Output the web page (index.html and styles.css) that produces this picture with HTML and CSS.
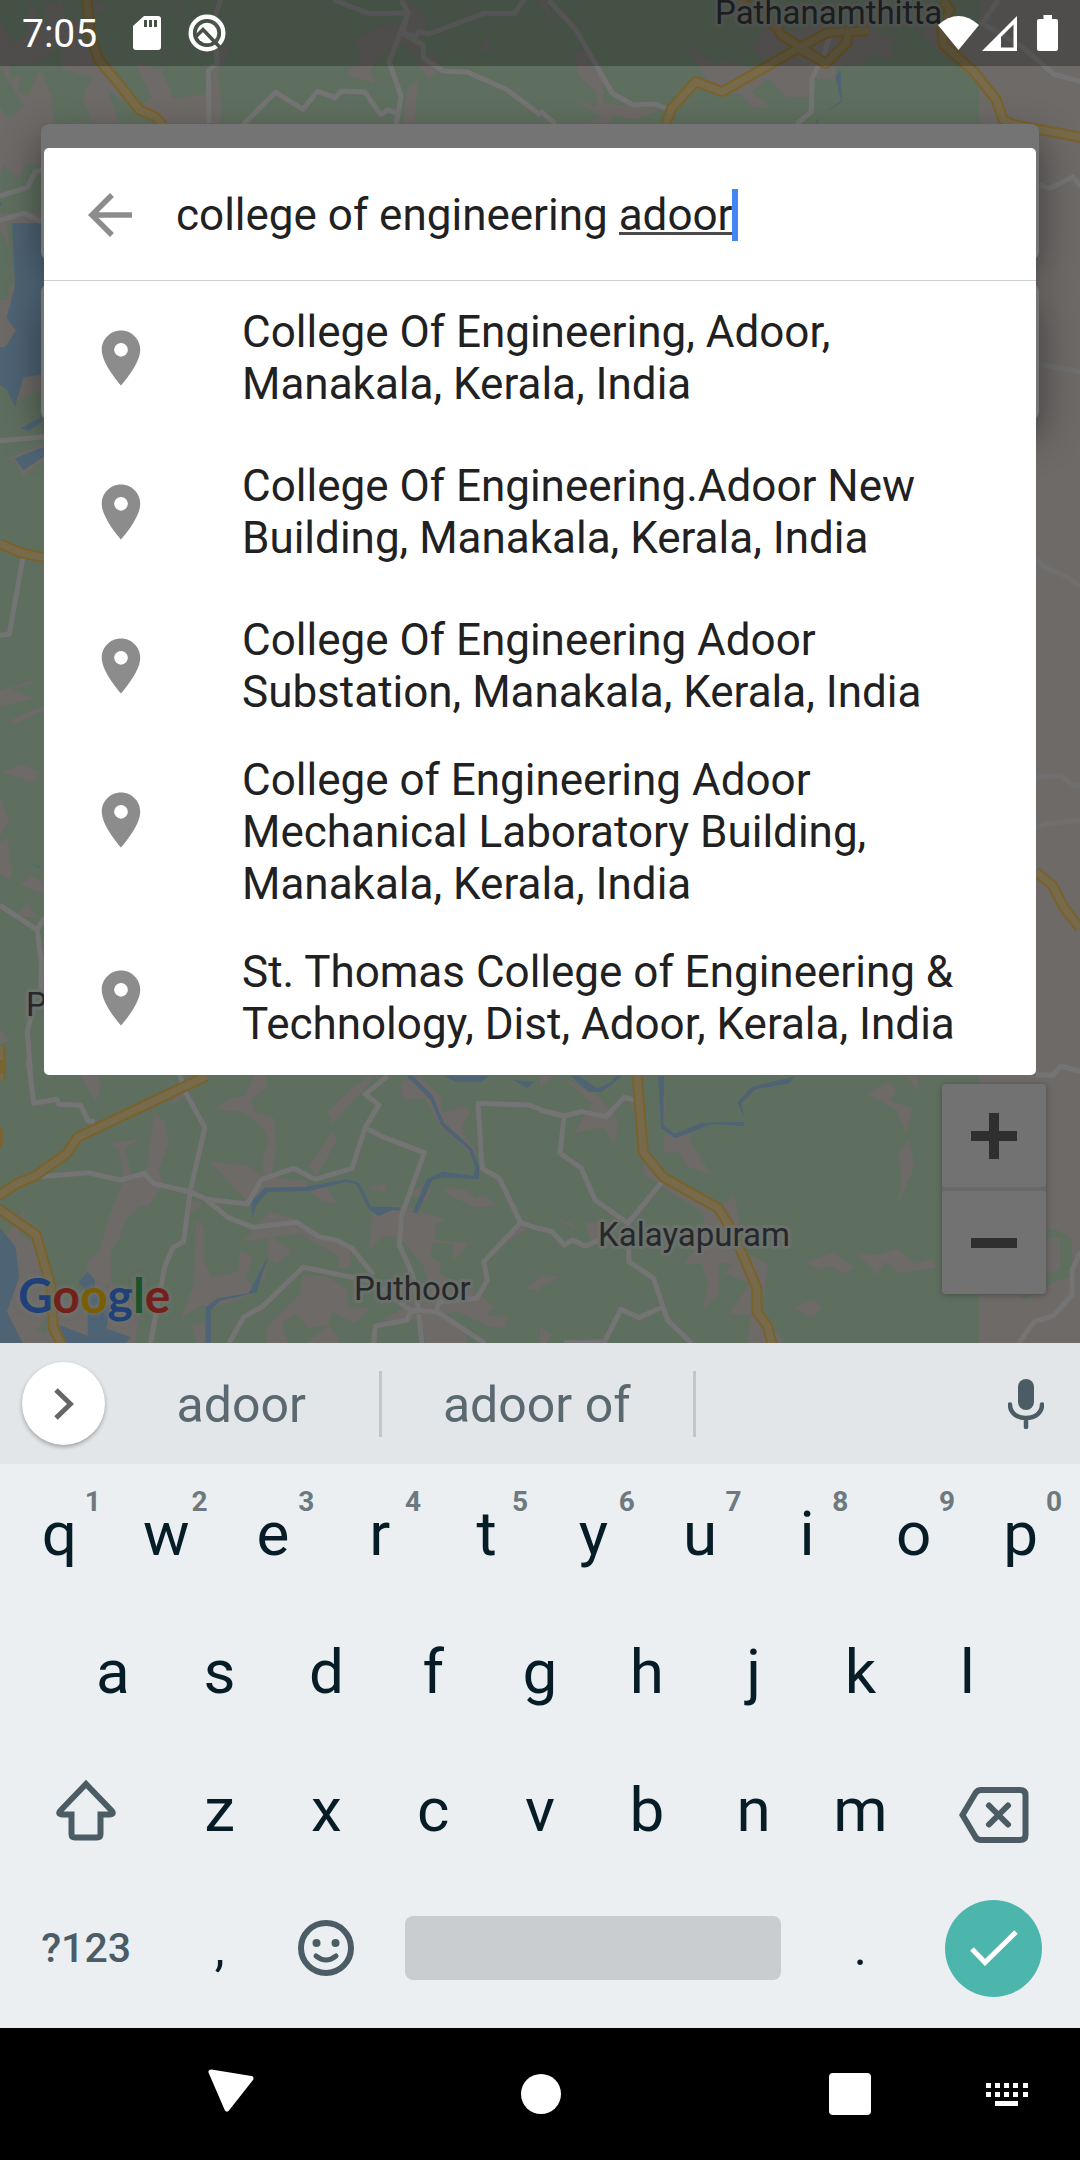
FILE: index.html
```html
<!DOCTYPE html>
<html lang="en">
<head>
<meta charset="utf-8">
<meta name="viewport" content="width=device-width, initial-scale=1">
<title>Place search</title>
<link rel="stylesheet" href="styles.css">
</head>
<body>
<div class="screen">
  <main class="map">
    <svg class="map-canvas" viewBox="0 0 1080 1343" preserveAspectRatio="xMidYMid slice" aria-hidden="true">
      <rect class="green" width="1080" height="1343"/>
      <rect class="land" x="979" width="101" height="1343"/>

      <!-- north west -->
      <g transform="scale(.3444 .3333)">
        <path class="land" d="M0 60L40 130L75 110L90 0L110 60L145 75L120 10L180 0L185 55L240 60L230 110L300 190L380 290L330 310L345 370H0ZM270 0L320 20L280 45ZM385 178L465 210L500 140L470 215L505 295L605 280L640 130L665 140L630 230L645 310L640 370H480L400 330L440 290ZM200 340L240 370H280ZM500 15L530 0L515 28ZM1005 225L1050 165L1030 120L1100 80L1170 70L1180 0L1240 60L1210 170L1170 130L1110 165L1075 210L1088 250ZM1392 145L1420 98V163ZM1210 190L1260 155L1275 205L1245 238ZM1185 258L1212 248L1205 370H1170L1175 320Z"/>
        <path class="green" d="M0 205L70 315L22 360L0 320ZM120 185L180 125V205L268 235L240 290L262 350L215 370H155L150 290L118 205L80 285L52 275L60 220L30 240V195ZM310 265L350 300L330 320Z"/>
        <path class="land" d="M0 350H125V500L70 490L60 540L10 495L0 520ZM0 640L120 635V670H20L45 900H0Z"/>
        <path class="green" d="M0 690L25 740L35 840L20 900H0Z"/>
        <path class="water" d="M35 670H128V900H32L44 860Z"/>
        <path class="water" d="M0 605L8 611L0 618Z"/>
        <path class="road" d="M640 0L625 50L630 190L605 212L607 370M705 375L800 277L880 328L922 274L972 293L992 273L1060 277L1105 344L1125 330L1150 338M970 0L1072 41L1185 38L1130 185L1165 290L1150 372M1165 0L1185 38L1168 100L1228 135L1230 175L1285 212L1358 217L1470 268L1570 345M1168 95L1205 110L1215 95L1245 102L1405 40L1495 40L1515 8L1525 0M0 588L80 562L102 515L128 510M0 660L70 640L120 665"/>
        <path class="highway-edge" d="M252 0L262 100L285 178L340 245L405 330L450 350L475 378"/>
        <path class="highway" d="M252 0L262 100L285 178L340 245L405 330L450 350L475 378"/>
      </g>

      <!-- north east -->
      <g transform="translate(540 0) scale(.3444 .3333)">
        <path class="land" d="M0 10L45 78L20 0H0ZM100 155L130 150L160 210L185 232V310L320 325L360 325L275 360L210 345L205 370H130L175 350L103 300L165 320V280L135 250L108 220ZM420 130L510 195L535 182L600 200L665 195L610 145L660 80L740 90L840 70L970 85L1028 115L1018 185L965 160L935 190L860 200L855 240L800 235L775 292L715 290L665 235L615 275L672 325L615 322L585 285L500 262ZM1105 100L1160 50H1200L1275 100V200L1160 160Z"/>
        <path class="water" d="M872 208L878 305L830 336L874 302L858 232ZM800 355L810 370H803Z"/>
        <path class="road" d="M25 0L105 90L160 190L210 280L270 315L335 312L375 330M0 332L45 372M845 100L825 160L790 235L788 335L745 372M1330 0L1285 70L1400 140L1490 222L1570 245M1450 555L1480 565L1548 530L1570 560"/>
        <path class="highway-edge" d="M365 372L382 325L452 245L530 275L750 145L830 190L890 130L895 95L955 92M580 0L690 85L700 105L830 190M750 145L830 100L895 92M1170 0L1190 30L1165 80L1172 135L1260 215L1325 300L1345 360L1380 375L1570 412"/>
        <path class="highway" d="M365 372L382 325L452 245L530 275L750 145L830 190L890 130L895 95L955 92M580 0L690 85L700 105L830 190M750 145L830 100L895 92M1170 0L1190 30L1165 80L1172 135L1260 215L1325 300L1345 360L1380 375L1570 412"/>
      </g>

      <!-- west edge -->
      <g transform="translate(0 300) scale(.3333 .4975)">
        <path class="land" d="M0 0H40L20 35L48 62L15 95H0ZM45 215L70 160L110 145L132 150V180L55 200ZM20 318L132 290V320L70 355L48 325ZM0 785L98 765L95 772L30 782L102 800L0 818ZM28 845L132 815V825L40 853ZM8 950L65 933L120 950L100 970ZM0 1000L28 1048L0 1075V1090L25 1082L28 1130L38 1138L30 1165L0 1155ZM62 1175L90 1157L132 1170V1195ZM48 1240L82 1210L112 1242ZM0 1465L28 1490L0 1495Z"/>
        <path class="water" d="M35 0H125V150L70 155L45 215L20 180L0 170V95L15 95L48 62L20 35ZM62 258L125 235V245L85 263ZM45 318L132 295V315L70 342ZM85 1130L122 1140L118 1142Z"/>
        <path class="road" d="M0 283L132 275M68 520L28 672L0 674M0 1217L112 1266L132 1242M112 1266L124 1330L122 1395M95 1435L82 1470L93 1568"/>
        <path class="highway-edge" d="M0 490L62 508L132 518M0 1500V1568"/>
        <path class="highway" d="M0 490L62 508L132 518M0 1500V1568"/>
      </g>

      <!-- east edge -->
      <g transform="translate(1020 120) scale(.3333 .625)">
        <path class="road faint" d="M50 390L180 403M48 703L80 717L145 732L180 747M48 1052L122 1049L160 1065H180M48 1132L80 1126L180 1120M48 1528H102L122 1514L180 1522"/>
        <path class="highway-edge" d="M48 1203L98 1225L132 1260L180 1293"/>
        <path class="highway" d="M48 1203L98 1225L132 1260L180 1293"/>
      </g>

      <!-- south west -->
      <g transform="translate(0 1060) scale(.3444 .3333)">
        <path class="land" d="M232 45L285 48L292 75L278 125ZM498 135L520 85L545 100ZM625 148L665 115L712 108L738 45H770L777 75L730 120L740 155L795 172L802 260L790 345H765L762 295L780 248L765 205L705 155ZM950 155L1020 85L1070 50H1090L965 192ZM967 212L980 240L918 350L898 318ZM447 155L478 185L490 250L460 330L475 370L430 440L408 438L365 480L350 520L448 493L355 520L322 575V660L365 700L410 745L390 849H65L20 755L55 650L45 560L12 540L70 445V480L55 520L110 560L140 640L190 720L240 700L255 600L290 570L315 470L355 370L358 330L342 265L312 252L412 233L362 265L382 345L425 335ZM607 304L720 318L765 350L890 362V385L780 395L735 430L715 420ZM890 385L945 380L980 430L935 425ZM530 470L560 425L595 430ZM570 478L592 505V600L615 652L690 635L697 572L732 590L715 650L740 690L770 650L780 525L848 572L805 612L775 590L740 700L620 745L590 735L525 773L562 672ZM705 545L780 455L850 475L905 520L1018 565V622L982 625L985 590L870 520ZM555 795L600 790V849H572ZM775 800L870 705L880 645L950 650L1010 690V740L1075 745L1030 790L965 755L955 795L895 803L860 760L820 790L835 849H775ZM955 795L990 849H890ZM1165 65L1220 50L1280 110L1285 160L1345 138L1368 155L1340 205L1378 270L1380 300L1330 245L1280 200L1235 118H1168ZM1062 385L1122 370L1118 395ZM1185 400L1240 370L1250 390L1240 425ZM1285 380L1355 390L1380 415L1410 405L1445 438L1380 442L1300 405ZM1070 575L1082 465L1150 435L1295 478L1262 498L1265 540L1362 550L1315 605V552L1255 548L1250 590L1280 608L1275 640L1370 690L1437 740L1410 768L1475 765L1468 803L1420 800L1380 780L1330 755L1270 765L1350 815L1360 849H1240L1220 780H1110L1180 740L1245 680L1230 620L1160 530L1110 530ZM1440 565L1510 480L1530 510ZM1528 685L1570 650V692Z"/>
        <path class="green" d="M105 812L135 770V820Z"/>
        <path class="water" d="M0 505L45 560L55 650L20 755L65 849H0ZM228 665L255 635L275 660V700L322 740L308 805L380 832L365 849H190L172 795L255 828V700ZM730 425L768 383L890 380L1005 358L1042 368L1078 440L1162 442L1160 452L1140 450L1100 468L1068 445L1035 373L1005 366L900 392L775 397L745 435L732 472ZM1170 450L1200 455L1238 358L1285 335L1375 348L1380 320L1362 270L1280 195L1250 120L1180 48H1198L1255 105L1290 190L1370 265L1392 320L1390 357L1285 353L1255 360L1212 460ZM1290 48H1420L1395 67H1325ZM1490 60L1550 65L1532 85ZM597 849V742L632 715L722 700L780 585L745 697L640 722L612 750V849Z"/>
        <path class="road" d="M82 0L98 130L165 118L170 133L235 136L255 182L275 185M522 45L540 100L595 203L553 390L533 545L502 563L478 620L437 850M115 350L255 338L350 360L420 340L445 370L553 396L600 418L718 432L760 358L852 325L915 358L1022 325L1060 203L1100 135L1060 103L1125 48M1060 203L1110 230L1232 278L1165 470L1160 555L1200 650L1215 750L1225 850M600 420L662 472L735 502L862 487L925 530L980 542L1022 565L1085 645M665 850L708 770L762 740L880 622L1085 665L1190 750L1272 757L1408 850M1085 850L1090 798L1182 780L1195 750M1570 148L1535 135L1388 130L1400 325L1450 355L1512 488L1405 605L1415 660L1385 715L1275 725L1268 750M1512 488L1570 508"/>
        <path class="highway-edge" d="M600 48L225 232L195 280L102 348L50 370L-5 408M-5 445L105 525L148 680L155 805L178 852M-8 0V40M-8 205V260"/>
        <path class="highway" d="M600 48L225 232L195 280L102 348L50 370L-5 408M-5 445L105 525L148 680L155 805L178 852"/>
      </g>

      <!-- south east -->
      <g transform="translate(540 1060) scale(.3444 .3333)">
        <path class="land" d="M0 48H40L0 80ZM60 48L170 110L228 180L217 255L185 200L100 220L150 130ZM355 48L368 155L358 150ZM945 100L1015 67L1037 92L1015 122L1082 145L1062 220L1035 150ZM1065 48H1095L1102 100ZM1072 242L1088 315L1038 440L1050 360L1040 275ZM358 225L440 215L435 245L498 345L430 320L400 275L360 278ZM300 300L360 350L480 440L520 440L565 407L580 500L560 560L662 612L650 700L640 760L705 840V849H602L612 765L548 762L610 670L535 640L560 610H520L518 705L472 750L488 670L468 612H420L440 580L480 520L475 460L345 375L300 340ZM35 475L95 490L108 508ZM130 490L170 485L230 510L150 545ZM0 648L62 650L0 682ZM770 605L850 578L915 620L885 642L845 618L812 630ZM918 578L985 585L1035 565L1092 612L1138 595L1150 625L1042 638L1002 605L980 645ZM738 743L795 717L820 742L795 775ZM0 800L35 825L20 849H0Z"/>
        <path class="green" d="M1440 505Q1545 505 1545 560V650L1505 660L1405 720L1380 690L1440 650L1510 630V535H1470Z"/>
        <path class="water" d="M90 48H115L165 85L205 68L222 48H240L180 95H140ZM343 48H360L358 195L390 222L470 188L592 186V198L500 192L392 235L352 205ZM740 48L725 70L625 88L585 130L592 168L572 128L615 80L720 55Z"/>
        <path class="road" d="M0 150L70 168L120 155L192 170L245 112L275 120M70 168L58 280L120 325L160 420L255 490L355 365M0 505L35 515L70 555L95 540L130 558L200 530M258 520V605L330 655L370 780L440 850M185 850L235 748L288 773L355 742M70 849L190 845M1440 45H1490L1512 18L1570 35M1570 575L1545 630V705L1490 768L1435 785L1390 850"/>
        <path class="highway-edge" d="M282 48L300 278L358 352L518 445L558 512L630 685V755L660 798L675 855"/>
        <path class="highway" d="M282 48L300 278L358 352L518 445L558 512L630 685V755L660 798L675 855"/>
      </g>

      <text class="place" x="715" y="24">Pathanamthitta</text>
      <text class="place" x="26" y="1016">Pandalam</text>
      <text class="place" x="598" y="1246">Kalayapuram</text>
      <text class="place" x="354" y="1300">Puthoor</text>
    </svg>

    <div class="fields-behind" aria-hidden="true">
      <div class="field-behind"></div>
      <div class="field-behind"></div>
    </div>

    <div class="logo"><span class="blue">G</span><span class="red">o</span><span class="yellow">o</span><span class="blue">g</span><span class="leaf">l</span><span class="red">e</span></div>

    <div class="zoom">
      <button class="zoom-btn" type="button" aria-label="Zoom in"><svg width="46" height="46" viewBox="0 0 46 46"><path d="M18 0h10v18h18v10H28v18H18V28H0V18h18z"/></svg></button>
      <button class="zoom-btn" type="button" aria-label="Zoom out"><svg width="46" height="46" viewBox="0 0 46 46"><path d="M0 18h46v10H0z"/></svg></button>
    </div>

    <header class="status">
      <span class="clock">7:05</span>
      <svg class="sd" width="28" height="34" viewBox="0 0 28 34"><path fill-rule="evenodd" d="M11 0H25Q28 0 28 3V31Q28 34 25 34H3Q0 34 0 31V10ZM11 4V11H14V4ZM16 4V11H19V4ZM21 4V11H24V4Z"/></svg>
      <svg width="38" height="38" viewBox="0 0 38 38"><circle cx="19" cy="19" r="16.300" fill="none" stroke="#fff" stroke-width="4.400"/><circle cx="19" cy="19" r="10.300"/><path d="M7 23.500L15 15.500L33 34.500" fill="none" stroke="#475146" stroke-width="3.600"/></svg>
      <span class="status-space"></span>
      <svg class="wifi" width="41" height="34" viewBox="0 0 41 34"><path d="M0 9Q20.500 -9 41 9L20.500 34Z"/></svg>
      <svg width="35" height="35" viewBox="0 0 35 35"><path fill-rule="evenodd" d="M35 0V35H0ZM31.500 8.500L19 21V31.500H31.500Z"/></svg>
      <svg class="battery" width="21" height="36" viewBox="0 0 21 36"><path d="M6.500 0H15V4H19Q21 4 21 6V34Q21 36 19 36H2Q0 36 0 34V6Q0 4 2 4H6.500Z"/></svg>
    </header>

    <section class="dialog" aria-label="Search places">
      <div class="search">
        <button class="back" type="button" aria-label="Back"><svg width="66" height="66" viewBox="0 0 24 24"><path d="M20 11H7.830l5.590-5.590L12 4l-8 8 8 8 1.410-1.410L7.830 13H20v-2z"/></svg></button>
        <div class="query">
          <input class="query-input" type="text" aria-label="Search" value="college of engineering adoor">
          <span class="composing"></span>
          <span class="caret"></span>
        </div>
      </div>
      <ul class="results">
        <li><a class="result" href="#"><svg class="pin" viewBox="0 0 24 24"><path d="M12 2C8.130 2 5 5.130 5 9c0 5.250 7 13 7 13s7-7.750 7-13c0-3.870-3.130-7-7-7zm0 9.500a2.500 2.500 0 0 1 0-5 2.500 2.500 0 0 1 0 5z"/></svg><span>College Of Engineering, Adoor, Manakala, Kerala, India</span></a></li>
        <li><a class="result" href="#"><svg class="pin" viewBox="0 0 24 24"><path d="M12 2C8.130 2 5 5.130 5 9c0 5.250 7 13 7 13s7-7.750 7-13c0-3.870-3.130-7-7-7zm0 9.500a2.500 2.500 0 0 1 0-5 2.500 2.500 0 0 1 0 5z"/></svg><span>College Of Engineering.Adoor New Building, Manakala, Kerala, India</span></a></li>
        <li><a class="result" href="#"><svg class="pin" viewBox="0 0 24 24"><path d="M12 2C8.130 2 5 5.130 5 9c0 5.250 7 13 7 13s7-7.750 7-13c0-3.870-3.130-7-7-7zm0 9.500a2.500 2.500 0 0 1 0-5 2.500 2.500 0 0 1 0 5z"/></svg><span>College Of Engineering Adoor Substation, Manakala, Kerala, India</span></a></li>
        <li><a class="result" href="#"><svg class="pin" viewBox="0 0 24 24"><path d="M12 2C8.130 2 5 5.130 5 9c0 5.250 7 13 7 13s7-7.750 7-13c0-3.870-3.130-7-7-7zm0 9.500a2.500 2.500 0 0 1 0-5 2.500 2.500 0 0 1 0 5z"/></svg><span>College of Engineering Adoor Mechanical Laboratory Building, Manakala, Kerala, India</span></a></li>
        <li><a class="result" href="#"><svg class="pin" viewBox="0 0 24 24"><path d="M12 2C8.130 2 5 5.130 5 9c0 5.250 7 13 7 13s7-7.750 7-13c0-3.870-3.130-7-7-7zm0 9.500a2.500 2.500 0 0 1 0-5 2.500 2.500 0 0 1 0 5z"/></svg><span>St. Thomas College of Engineering &amp; Technology, Dist, Adoor, Kerala, India</span></a></li>
      </ul>
    </section>
  </main>

  <section class="keyboard" aria-label="Keyboard">
    <div class="suggestions">
      <button class="expand" type="button" aria-label="More"><svg width="20" height="32" viewBox="0 0 20 32"><path d="M2 2L16.500 16L2 30" fill="none" stroke="#666" stroke-width="5"/></svg></button>
      <button class="suggestion first" type="button">adoor</button>
      <button class="suggestion" type="button">adoor of</button>
      <span class="suggestion-empty"></span>
      <button class="mic" type="button" aria-label="Voice input"><svg width="36" height="50" viewBox="0 0 36 50"><rect x="10" width="16" height="31" rx="8" fill="#4b5c65"/><path d="M2 25.500C2 34 9 39 18 39S34 34 34 25.500M18 39V48" fill="none" stroke="#4b5c65" stroke-width="4.500" stroke-linecap="round"/></svg></button>
    </div>
    <div class="keys">
      <div class="row">
        <button class="key" type="button">q<span class="hint">1</span></button>
        <button class="key" type="button">w<span class="hint">2</span></button>
        <button class="key" type="button">e<span class="hint">3</span></button>
        <button class="key" type="button">r<span class="hint">4</span></button>
        <button class="key" type="button">t<span class="hint">5</span></button>
        <button class="key" type="button">y<span class="hint">6</span></button>
        <button class="key" type="button">u<span class="hint">7</span></button>
        <button class="key" type="button">i<span class="hint">8</span></button>
        <button class="key" type="button">o<span class="hint">9</span></button>
        <button class="key" type="button">p<span class="hint">0</span></button>
      </div>
      <div class="row">
        <span class="half"></span>
        <button class="key" type="button">a</button>
        <button class="key" type="button">s</button>
        <button class="key" type="button">d</button>
        <button class="key" type="button">f</button>
        <button class="key" type="button">g</button>
        <button class="key" type="button">h</button>
        <button class="key" type="button">j</button>
        <button class="key" type="button">k</button>
        <button class="key" type="button">l</button>
        <span class="half"></span>
      </div>
      <div class="row">
        <button class="key wide" type="button" aria-label="Shift"><svg class="line-icon" width="62" height="62" viewBox="0 0 62 62"><path d="M31 5L56 31Q60 35 55 35.500H45.500V55Q45.500 58.500 42 58.500H20Q16.500 58.500 16.500 55V35.500H7Q2 35 6 31Z"/></svg></button>
        <button class="key" type="button">z</button>
        <button class="key" type="button">x</button>
        <button class="key" type="button">c</button>
        <button class="key" type="button">v</button>
        <button class="key" type="button">b</button>
        <button class="key" type="button">n</button>
        <button class="key" type="button">m</button>
        <button class="key wide" type="button" aria-label="Delete"><svg class="line-icon low" width="70" height="56" viewBox="0 0 70 56"><path d="M3.500 28L16.500 6Q18.500 3 22 3H61Q66.500 3 66.500 8V48Q66.500 53 61 53H22Q18.500 53 16.500 50Z"/><path d="M30 18.500L49 37.500M49 18.500L30 37.500" stroke-linecap="round"/></svg></button>
      </div>
      <div class="row">
        <button class="key wide symbols" type="button">?123</button>
        <button class="key punct" type="button">,</button>
        <button class="key" type="button" aria-label="Emoji"><svg class="line-icon" width="56" height="56" viewBox="0 0 56 56"><circle cx="28" cy="28" r="25"/><path d="M18 36Q28 44 38 36" stroke-width="5" stroke-linecap="round"/><circle class="dot" cx="18.500" cy="23" r="4"/><circle class="dot" cx="37.500" cy="23" r="4"/></svg></button>
        <button class="key space" type="button" aria-label="Space"><span class="space-bar"></span></button>
        <button class="key punct" type="button">.</button>
        <button class="key wide" type="button" aria-label="Done"><span class="done"><svg width="48" height="36" viewBox="0 0 48 36"><path d="M2 19L15 32.500L46 2" fill="none" stroke="#fff" stroke-width="5"/></svg></span></button>
      </div>
    </div>
  </section>

  <nav class="system-nav" aria-label="System">
    <div class="nav-main">
      <button class="nav-btn" type="button" aria-label="Back"><svg width="48" height="52" viewBox="0 0 48 52"><path d="M4 4L44 10.500L20 41Z" fill="#fff" stroke="#fff" stroke-width="5" stroke-linejoin="round"/></svg></button>
      <button class="nav-btn" type="button" aria-label="Home"><svg width="40" height="40" viewBox="0 0 40 40"><circle cx="20" cy="20" r="20" fill="#fff"/></svg></button>
      <button class="nav-btn" type="button" aria-label="Recent apps"><svg width="42" height="42" viewBox="0 0 42 42"><rect width="42" height="42" rx="4" fill="#fff"/></svg></button>
    </div>
    <button class="nav-btn" type="button" aria-label="Switch keyboard"><svg width="42" height="23" viewBox="0 0 42 23" fill="#fff"><path d="M0 0h5v5H0zM9 0h5v5H9zM18 0h5v5h-5zM27 0h5v5h-5zM37 0h5v5h-5zM0 9h5v5H0zM9 9h5v5H9zM18 9h5v5h-5zM27 9h5v5h-5zM37 9h5v5h-5zM9 18h23v5H9z"/></svg></button>
  </nav>
</div>
</body>
</html>
```
FILE: styles.css
```css
* { box-sizing: border-box; }
body { margin: 0; font-family: Roboto, "Liberation Sans", sans-serif; }
button { margin: 0; padding: 0; border: 0; background: none; font: inherit; color: inherit; }
svg { display: block; flex: none; }

.screen { display: flex; flex-direction: column; min-height: 100vh; }

/* Map, dimmed behind the dialog */
.map { position: relative; flex: 1; padding: 148px 44px 0; overflow: hidden; background: #5f6f5f; }
.map-canvas { position: absolute; inset: 0; width: 100%; height: 100%; }
.green { fill: #5f6f5f; }
.land { fill: #6d6a68; }
.water { fill: #4e6374; }
.road, .highway, .highway-edge { fill: none; stroke-linejoin: round; vector-effect: non-scaling-stroke; }
.road { stroke: #757475; stroke-width: 5px; }
.road.faint { stroke: #706f6f; }
.highway-edge { stroke: #7a622c; stroke-width: 11px; }
.highway { stroke: #776b4b; stroke-width: 7px; }
.place { font-size: 33px; fill: #26282b; stroke: #6c716c; stroke-width: 6px; paint-order: stroke; stroke-linejoin: round; }

.fields-behind { position: absolute; top: 124px; left: 41px; right: 41px; display: flex; flex-direction: column; gap: 24px; }
.field-behind { height: 136px; border-radius: 8px; background: #747474; box-shadow: 0 16px 40px rgba(0, 0, 0, .45); }

.logo { position: absolute; left: 18px; bottom: 18px; font: 700 48px/60px Lato, sans-serif; text-shadow: 0 0 6px #6e746e, 0 0 6px #6e746e; }
.blue { color: #1f4078; }
.red { color: #73201b; }
.yellow { color: #7b5d03; }
.leaf { color: #1a532a; }

.zoom { position: absolute; right: 34px; bottom: 49px; width: 104px; display: flex; flex-direction: column; gap: 4px; border-radius: 4px; background: #676867; box-shadow: 0 1px 6px rgba(0, 0, 0, .3); }
.zoom-btn { display: flex; align-items: center; justify-content: center; height: 103px; border-radius: 4px; background: #727272; fill: #2f2f2f; }

.status { position: absolute; top: 0; left: 0; right: 0; display: flex; align-items: center; height: 66px; padding: 0 22px; background: rgba(0, 0, 0, .27); color: #fff; fill: #fff; }
.clock { width: 111px; padding-top: 2px; font-size: 39px; line-height: 64px; }
.sd { margin-right: 27px; }
.status-space { flex: 1; }
.wifi { margin-right: 3px; }
.battery { margin-left: 20px; }

/* Search dialog */
.dialog { position: relative; border-radius: 5px; background: #fff; color: #212121; font-size: 44px; line-height: 52px; }
.search { display: flex; align-items: center; height: 133px; padding: 1px 33px 0; border-bottom: 1px solid #d0d0d0; }
.back { margin-right: 33px; fill: #8c8c8c; }
.query { position: relative; flex: 1; }
.query-input { display: block; width: 100%; height: 52px; padding: 0; border: 0; outline: 0; background: none; color: inherit; font: inherit; }
.composing { position: absolute; left: 443px; top: 43px; width: 114px; height: 3px; background: #4a4a4a; }
.caret { position: absolute; left: 556px; top: 0; width: 6px; height: 52px; background: #4486f4; }
.results { margin: 0; padding: 0; list-style: none; }
.result { display: flex; align-items: center; gap: 88px; min-height: 154px; padding: 11px 44px; color: inherit; text-decoration: none; }
.pin { align-self: flex-start; width: 66px; height: 132px; fill: #8c8c8c; }

/* Keyboard */
.keyboard { background: #ebeff2; color: #061c27; }
.suggestions { display: flex; align-items: center; height: 121px; padding: 0 36px 0 22px; background: #e2e6e9; color: #5a6870; font-size: 50px; line-height: 66px; }
.expand { display: flex; align-items: center; justify-content: center; width: 83px; height: 83px; border-radius: 50%; background: #fff; box-shadow: 0 2px 4px rgba(0, 0, 0, .3); }
.suggestion { flex: 313; height: 66px; padding: 2px 2px 0 0; border-right: 3px solid #c2c6c9; line-height: 64px; }
.suggestion.first { flex: 276; }
.suggestion-empty { flex: 316; }

.keys { padding: 1px 6px 11px; }
.row { display: flex; height: 138px; }
.key { position: relative; display: flex; align-items: center; justify-content: center; flex: 2 1 0; font-size: 62px; line-height: 72px; }
.wide { flex-grow: 3; }
.half { flex: 1 1 0; }
.hint { position: absolute; top: 23px; right: 12px; color: #6e797f; font-size: 28px; font-weight: 700; line-height: 28px; }
.line-icon { fill: none; stroke: #4b5c65; stroke-width: 6px; }
.line-icon .dot { fill: #4b5c65; stroke: none; }
.low { margin-top: 10px; }
.symbols { color: #4b5c65; font-size: 41px; font-weight: 500; }
.punct { font-size: 50px; }
.space { flex-grow: 8; }
.space-bar { width: 88%; height: 64px; border-radius: 8px; background: #c9cdd0; }
.done { display: flex; align-items: center; justify-content: center; width: 97px; height: 97px; border-radius: 50%; background: #4db6ac; }

/* System navigation */
.system-nav { display: flex; align-items: center; height: 132px; padding: 0 29px 0 187px; background: #000; }
.nav-main { display: flex; flex: 1; justify-content: space-between; margin-right: 69px; }
.nav-btn { display: flex; align-items: center; justify-content: center; width: 88px; height: 88px; }
```
